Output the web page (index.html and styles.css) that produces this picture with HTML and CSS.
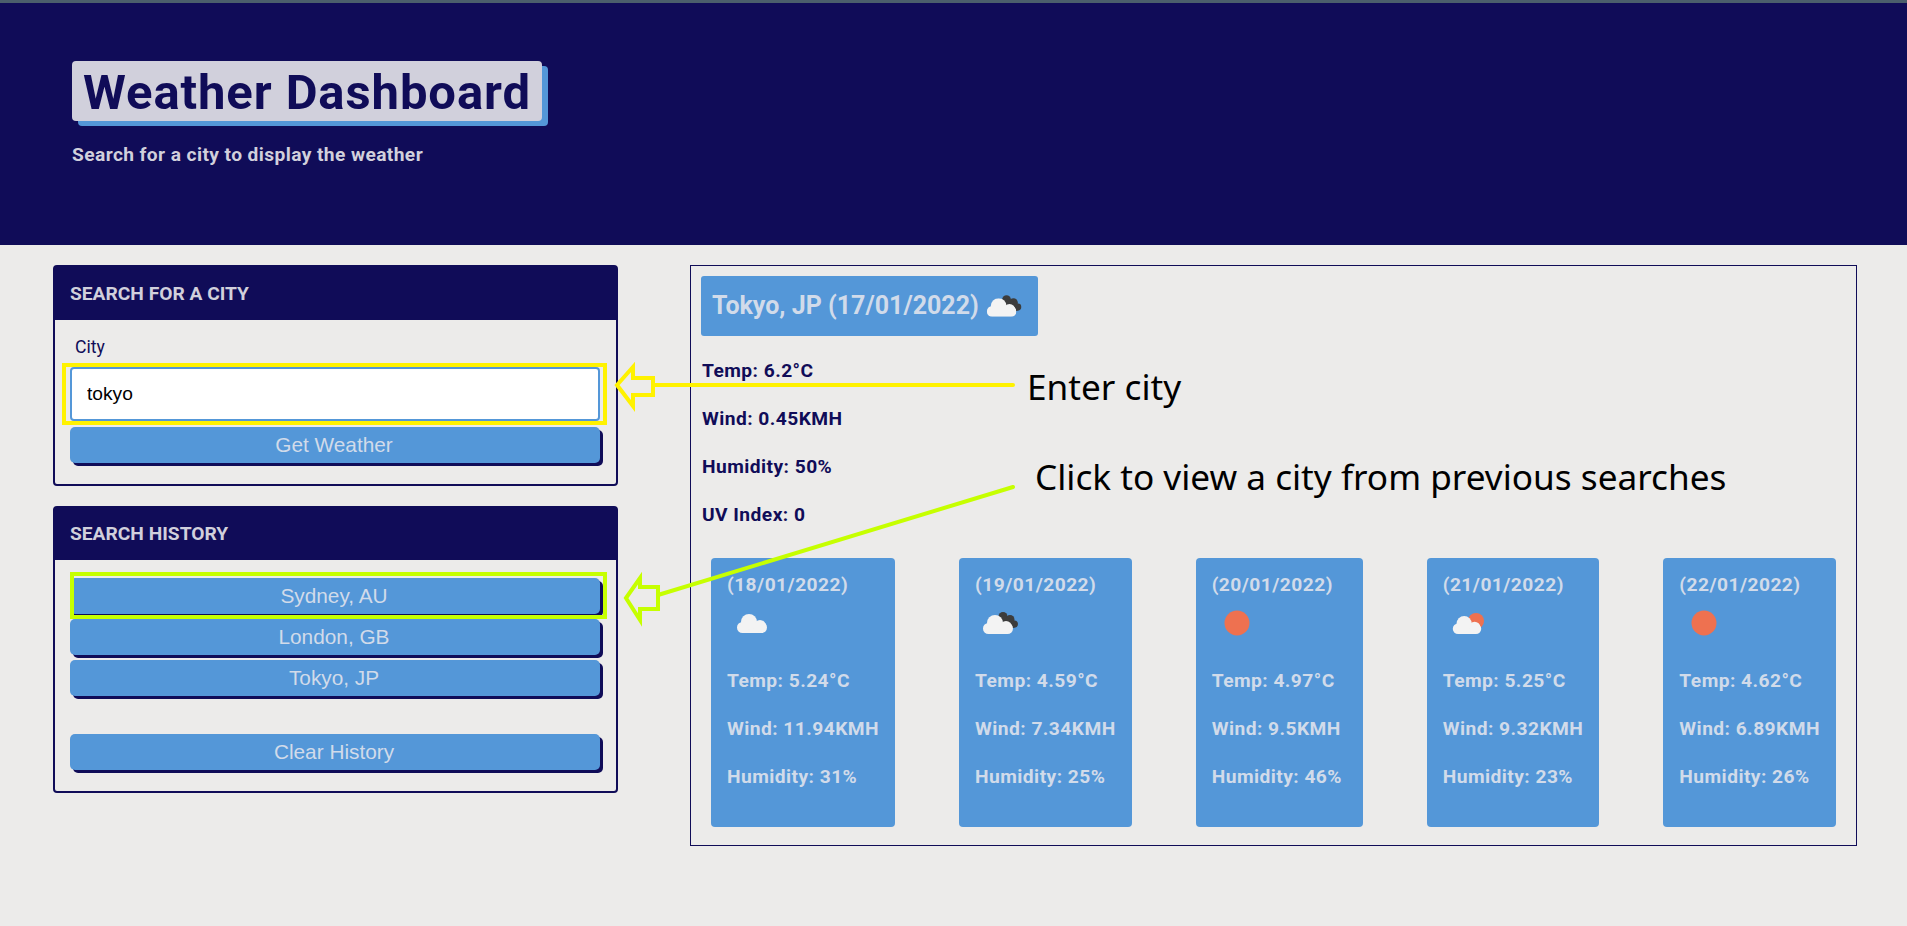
FILE: index.html
```html
<!DOCTYPE html>
<html lang="en">
<head>
    <meta charset="UTF-8">
    <meta name="viewport" content="width=device-width, initial-scale=1.0">
    <title>Weather Dashboard</title>
    <link rel="stylesheet" href="styles.css">
</head>
<body>

    <!-- shared icon shapes -->
    <svg class="icon-defs" width="0" height="0">
        <symbol id="cloud-white" viewBox="0 0 30 19">
            <rect x="0" y="8" width="30" height="11" rx="5.5" fill="#f3f3f3"/>
            <circle cx="12" cy="8" r="8" fill="#f3f3f3"/>
            <circle cx="23" cy="12" r="6" fill="#f3f3f3"/>
        </symbol>
        <g id="cloud-dark" fill="#3c3c3c">
            <circle cx="28" cy="18.5" r="4.5"/>
            <circle cx="35" cy="21.5" r="4.5"/>
            <circle cx="39.5" cy="26" r="3.5"/>
            <path d="M25 16L40 23L41 29L30 33Z"/>
        </g>
    </svg>

    <header class="page-header">
        <h1>Weather Dashboard</h1>
        <p class="lead">Search for a city to display the weather</p>
    </header>

    <main class="content">
        <aside class="sidebar">
            <section class="card">
                <h2 class="card-header">Search for a city</h2>
                <form class="card-body">
                    <label class="city-label" for="city">City</label>
                    <input class="city-input" type="text" id="city" value="tokyo">
                    <button class="btn btn-search" type="button">Get Weather</button>
                </form>
            </section>
            <section class="card">
                <h2 class="card-header">Search history</h2>
                <div class="card-body history">
                    <button class="btn" type="button">Sydney, AU</button>
                    <button class="btn" type="button">London, GB</button>
                    <button class="btn" type="button">Tokyo, JP</button>
                    <button class="btn btn-clear" type="button">Clear History</button>
                </div>
            </section>
        </aside>

        <section class="weather">
            <h2 class="today">Tokyo, JP (17/01/2022)
                <svg class="wx" viewBox="0 0 50 50">
                    <use href="#cloud-dark"/>
                    <use href="#cloud-white" x="8" y="17" width="30" height="19"/>
                </svg>
            </h2>
            <p class="stat">Temp: 6.2°C</p>
            <p class="stat">Wind: 0.45KMH</p>
            <p class="stat">Humidity: 50%</p>
            <p class="stat">UV Index: 0</p>

            <div class="forecast">
                <article class="day">
                    <h3>(18/01/2022)</h3>
                    <svg class="wx" viewBox="0 0 50 50">
                        <use href="#cloud-white" x="10" y="16" width="30" height="19"/>
                    </svg>
                    <p>Temp: 5.24°C</p>
                    <p>Wind: 11.94KMH</p>
                    <p>Humidity: 31%</p>
                </article>
                <article class="day">
                    <h3>(19/01/2022)</h3>
                    <svg class="wx" viewBox="0 0 50 50">
                        <use href="#cloud-dark"/>
                        <use href="#cloud-white" x="8" y="17" width="30" height="19"/>
                    </svg>
                    <p>Temp: 4.59°C</p>
                    <p>Wind: 7.34KMH</p>
                    <p>Humidity: 25%</p>
                </article>
                <article class="day">
                    <h3>(20/01/2022)</h3>
                    <svg class="wx" viewBox="0 0 50 50">
                        <circle cx="25" cy="25" r="12.5" fill="#ee7150"/>
                    </svg>
                    <p>Temp: 4.97°C</p>
                    <p>Wind: 9.5KMH</p>
                    <p>Humidity: 46%</p>
                </article>
                <article class="day">
                    <h3>(21/01/2022)</h3>
                    <svg class="wx" viewBox="0 0 50 50">
                        <circle cx="33" cy="23" r="8" fill="#ee7150"/>
                        <use href="#cloud-white" x="9" y="18" width="30" height="18"/>
                    </svg>
                    <p>Temp: 5.25°C</p>
                    <p>Wind: 9.32KMH</p>
                    <p>Humidity: 23%</p>
                </article>
                <article class="day">
                    <h3>(22/01/2022)</h3>
                    <svg class="wx" viewBox="0 0 50 50">
                        <circle cx="25" cy="25" r="12.5" fill="#ee7150"/>
                    </svg>
                    <p>Temp: 4.62°C</p>
                    <p>Wind: 6.89KMH</p>
                    <p>Humidity: 26%</p>
                </article>
            </div>
        </section>
    </main>

    <!-- annotations drawn on top of the screenshot -->
    <svg class="marks" width="1907" height="926" viewBox="0 0 1907 926">
        <g fill="none" stroke="#fff200" stroke-width="4">
            <rect x="64" y="365" width="541" height="58"/>
            <path d="M617 385L633 367V378H653V395H633V406Z"/>
            <path d="M653 385H1013" stroke-linecap="round"/>
        </g>
        <g fill="none" stroke="#c6ff00" stroke-width="4">
            <rect x="72" y="574" width="533" height="43"/>
            <path d="M626 598L640 578V587H658V609H640V620Z"/>
            <path d="M658 595L1013 487" stroke-linecap="round"/>
        </g>
    </svg>
    <span class="note note-city">Enter city</span>
    <span class="note note-history">Click to view a city from previous searches</span>

</body>
</html>
```

FILE: styles.css
```css
/* Global Styles */
* {
    box-sizing: border-box;
    margin: 0;
    padding: 0;
}
body {
    font-family: Roboto, sans-serif;
    background: #ecebea;
    color: #100c58;
    position: relative;
    height: 926px;
    overflow: hidden;
}
.icon-defs {
    position: absolute;
}

/* Header */
.page-header {
    background: #100c58;
    border-top: 3px solid #4b5f6c;
    height: 245px;
    padding: 58px 0 0 72px;
}
h1 {
    display: block;
    width: 470px;
    height: 60px;
    line-height: 64px;
    padding-left: 11px;
    font-size: 49px;
    font-weight: 700;
    letter-spacing: 0.9px;
    color: #100c58;
    background: #d1d0dc;
    border-radius: 4px;
    box-shadow: 6px 5px 0 #5497d8;
}
.lead {
    margin-top: 22px;
    font-size: 19.2px;
    line-height: 24px;
    font-weight: 700;
    letter-spacing: 0.4px;
    color: #d1d0dc;
}

/* Main layout */
.content {
    display: flex;
    gap: 72px;
    padding: 20px 50px 0 53px;
}
.sidebar {
    width: 565px;
    display: flex;
    flex-direction: column;
    gap: 20px;
    flex-shrink: 0;
}
.card {
    border: 2px solid #100c58;
    border-radius: 4px;
}
.card-header {
    height: 53px;
    line-height: 53px;
    padding-left: 15px;
    background: #100c58;
    color: #d1d0dc;
    font-size: 19.2px;
    font-weight: 700;
    text-transform: uppercase;
}
.card + .card .card-header {
    height: 52px;
    line-height: 52px;
}
.card-body {
    padding: 15px 16px 21px 15px;
}
.history {
    padding-top: 18px;
}
.city-label {
    display: block;
    padding-left: 5px;
    margin-bottom: 8px;
    font-size: 17.6px;
    line-height: 24px;
}
.city-input {
    display: block;
    width: 100%;
    height: 54px;
    padding: 0 15px;
    border: 2px solid #5497d8;
    border-radius: 4px;
    background: #fff;
    color: #000;
    font-family: 'Liberation Sans', sans-serif;
    font-size: 19.2px;
}
.btn {
    display: block;
    width: 100%;
    height: 36px;
    margin-bottom: 5px;
    padding-right: 2px;
    border: none;
    border-radius: 5px;
    background: #5497d8;
    color: #d1dbea;
    font-family: 'Liberation Sans', sans-serif;
    font-size: 20.8px;
    box-shadow: 3px 3px 0 #100c58;
}
.btn-search {
    margin: 6px 0 0;
}
.btn-clear {
    margin: 38px 0 0;
}

/* Weather panel */
.weather {
    flex: 1;
    height: 581px;
    padding: 10px;
    border: 1px solid #100c58;
}
.today {
    display: flex;
    align-items: center;
    width: 337px;
    height: 60px;
    padding-left: 11px;
    background: #5497d8;
    border-radius: 3px;
    color: #d1dbea;
    font-size: 25px;
    font-weight: 700;
    line-height: 56px;
    white-space: nowrap;
}
.today .wx {
    margin-left: auto;
    margin-right: 10px;
}
.wx {
    display: block;
    width: 50px;
    height: 50px;
}
.stat {
    margin: 23px 0 0 1px;
    padding-bottom: 1px;
    font-size: 19.2px;
    line-height: 24px;
    font-weight: 700;
    letter-spacing: 0.45px;
}
.forecast {
    display: flex;
    justify-content: space-between;
    margin-top: 30px;
    padding: 0 10px;
}
.day {
    min-width: 167px;
    height: 269px;
    padding: 15px 16px 0;
    background: #5497d8;
    border-radius: 4px;
    color: #d1dbea;
    white-space: nowrap;
}
.day h3 {
    font-size: 19.2px;
    line-height: 24px;
    font-weight: 700;
    letter-spacing: 0.45px;
    margin-bottom: 1px;
}
.day p {
    margin-top: 24px;
    font-size: 19.2px;
    line-height: 24px;
    font-weight: 700;
    letter-spacing: 0.45px;
}
.day p:first-of-type {
    margin-top: 21px;
}

/* Annotations */
.marks {
    position: absolute;
    top: 0;
    left: 0;
    pointer-events: none;
}
.note {
    position: absolute;
    font-family: 'Noto Sans', sans-serif;
    font-size: 35.2px;
    line-height: 44px;
    color: #000;
    white-space: nowrap;
}
.note-city {
    left: 1027px;
    top: 364px;
}
.note-history {
    left: 1035px;
    top: 454px;
}
```
